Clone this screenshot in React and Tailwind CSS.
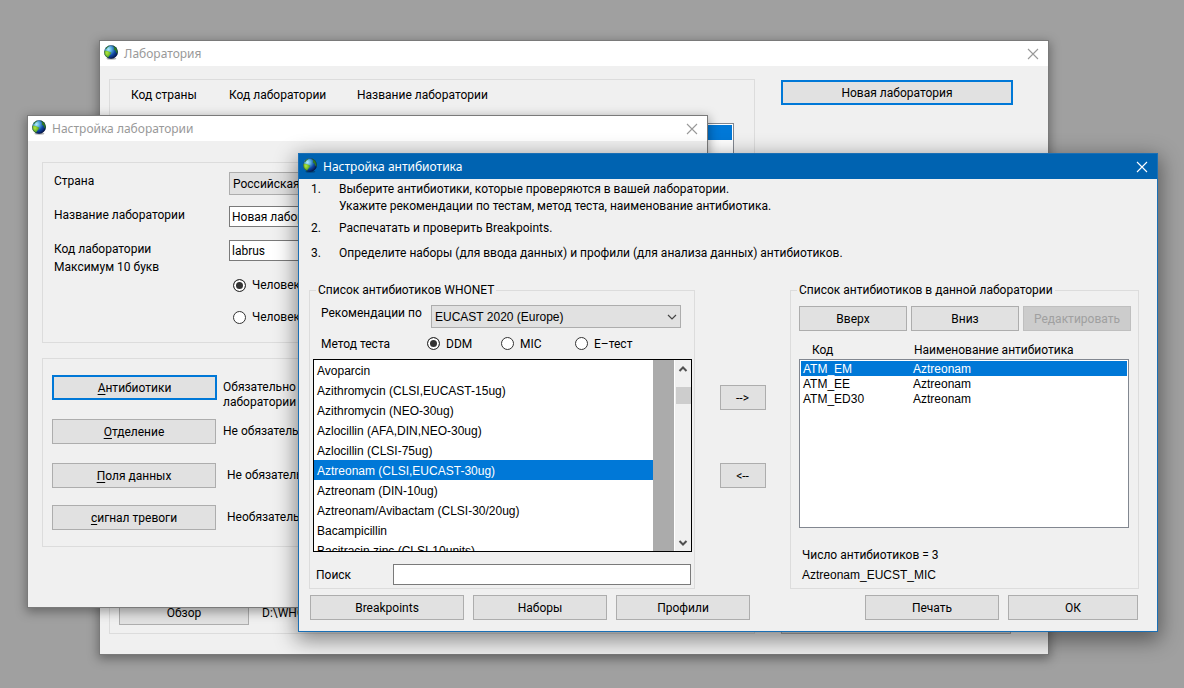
import { useId, useState } from "react";

function Globe() {
  const id = useId();
  return (
    <svg viewBox="0 0 16 16" className="mb-[3px] size-4 shrink-0" aria-hidden="true">
      <defs>
        <radialGradient id={id + "s"} cx="0.32" cy="0.3" r="0.75">
          <stop offset="0" stopColor="#b4ecf8" />
          <stop offset="0.3" stopColor="#5aaede" />
          <stop offset="0.65" stopColor="#0f48a4" />
          <stop offset="1" stopColor="#04144a" />
        </radialGradient>
        <radialGradient id={id + "l"} cx="0.4" cy="0.3" r="0.8">
          <stop offset="0" stopColor="#b4e83a" />
          <stop offset="0.5" stopColor="#6cb82c" />
          <stop offset="1" stopColor="#1c5a18" />
        </radialGradient>
        <clipPath id={id + "c"}>
          <circle cx="7" cy="8" r="6.8" />
        </clipPath>
      </defs>
      <ellipse cx="7.4" cy="14.6" rx="5" ry="1.2" fill="#000" opacity="0.3" />
      <circle cx="7" cy="8" r="6.8" fill={`url(#${id}s)`} />
      <g clipPath={`url(#${id}c)`}>
        <path d="M0 6.6 L2.5 6.8 L5 7.4 L7.4 8.8 L6.2 10.8 L4.8 12.4 L3.8 14.6 L0 13Z" fill={`url(#${id}l)`} />
        <path d="M8 1 L12 2 L14 6 L14 10 L12.2 8.6 L11.4 6.4 L9.8 5.4 L10.2 3.4Z" fill="#2f7a22" />
        <path d="M1.2 4 L4.4 1.4 L6.4 1.4 L3.8 3.2 L2 5.4Z" fill="#3f8a3a" />
      </g>
      <circle cx="7" cy="8" r="6.5" fill="none" stroke="#0a1f3a" strokeWidth="0.6" opacity="0.6" />
    </svg>
  );
}

function Chevron({ up, bold, className = "" }) {
  return (
    <svg viewBox="0 0 10 6" className={"h-1.5 w-2.5 " + className} aria-hidden="true">
      <path d={up ? "M1.5 5 L5 1.5 L8.5 5" : bold ? "M1.5 1 L5 4.5 L8.5 1" : "M1 1 L5 5 L9 1"} fill="none" stroke="currentColor" strokeWidth={bold ? 2 : 1.2} />
    </svg>
  );
}

function AppWindow({ title, active, className, children }) {
  return (
    <section
      aria-label={title}
      className={
        "absolute flex flex-col border bg-[#f0f0f0] " +
        (active
          ? "border-[#1a6fb5] shadow-[0_6px_20px_2px_rgba(0,0,0,0.45)] "
          : "border-[#7a7a7a] shadow-[0_3px_10px_1px_rgba(0,0,0,0.35)] ") +
        className
      }
    >
      <header
        className={
          "flex h-[25px] shrink-0 items-center gap-1 pr-1 pl-1 font-['Noto_Sans',sans-serif] " +
          (active ? "bg-[#0063b1] text-white" : "bg-white text-[#999999]")
        }
      >
        <Globe />
        <h2 className="flex-1">{title}</h2>
        <button type="button" aria-label="Закрыть" className="flex h-5 w-[22px] items-center justify-center">
          <svg viewBox="0 0 12 12" className="size-3" aria-hidden="true">
            <path d="M1 1 L11 11 M11 1 L1 11" stroke="currentColor" strokeWidth="1.1" />
          </svg>
        </button>
      </header>
      {children}
    </section>
  );
}

function Button({ children, primary, className = "", ...rest }) {
  return (
    <button
      type="button"
      className={
        "h-[25px] bg-[#e1e1e1] disabled:border-[#bfbfbf] disabled:bg-[#cccccc] disabled:text-[#a0a0a0] " +
        (primary ? "border-2 border-[#0078d7] " : "border border-[#adadad] ") +
        className
      }
      {...rest}
    >
      {children}
    </button>
  );
}

function Radio({ name, label, defaultChecked, className = "" }) {
  return (
    <label className={"flex items-center gap-1.5 whitespace-nowrap " + className}>
      <input
        type="radio"
        name={name}
        defaultChecked={defaultChecked}
        className="size-[13px] shrink-0 appearance-none rounded-full border border-[#333333] bg-white checked:bg-[#333333] checked:shadow-[inset_0_0_0_2px_white]"
      />
      {label}
    </label>
  );
}

function Combo({ id, value, className = "" }) {
  return (
    <div className={"relative w-full " + className}>
      <select id={id} className="block h-[23px] w-full appearance-none border border-[#adadad] bg-[#e1e1e1] pr-6 pl-[3px]">
        <option>{value}</option>
      </select>
      <Chevron className="pointer-events-none absolute top-[9px] right-1 text-[#444444]" />
    </div>
  );
}

function LaboratoryWindow() {
  return (
    <AppWindow title="Лаборатория" className="top-10 right-[135px] left-[99px]">
      <div className="flex gap-[26px] pt-[13px] pr-[35px] pb-5 pl-[9px]">
        <div className="flex h-[555px] flex-1 flex-col border border-[#dcdcdc] pl-[9px]">
          <div className="flex h-[43px] pt-[6px] pl-[12px] leading-[18px]">
            <span className="w-[98px]">Код страны</span>
            <span className="w-[128px]">Код лаборатории</span>
            <span>Название лаборатории</span>
          </div>
          <div className="mr-[20px] h-[380px] border border-[#828790] bg-white p-px">
            <div className="h-[15px] bg-[#0078d7]" />
          </div>
          <div className="mt-auto mb-[8px] flex items-center gap-[13px]">
            <Button className="w-[130px]">Обзор</Button>
            <span>D:\WHONET</span>
          </div>
        </div>
        <div className="flex w-[232px] flex-col justify-between pt-px">
          <Button primary>Новая лаборатория</Button>
          <Button className="mr-[2px]">Выход</Button>
        </div>
      </div>
    </AppWindow>
  );
}

const sections = [
  { key: "А", rest: "нтибиотики", note: ["Обязательно для", "лаборатории"], primary: true, height: "h-11", indent: "pl-[6px]" },
  { key: "О", rest: "тделение", note: ["Не обязательно"], height: "h-11", indent: "pl-[7px]" },
  { key: "П", rest: "оля данных", note: ["Не обязательно"], height: "h-[42px]", indent: "pl-[11px]" },
  { key: "с", rest: "игнал тревоги", note: ["Необязательно"], height: "h-[41px]", indent: "pl-[11px]" },
];

function LaboratorySetupWindow() {
  const field = "h-[21px] border border-[#7a7a7a] bg-white px-[2px]";
  return (
    <AppWindow title="Настройка лаборатории" className="top-[115px] right-[476px] left-[27px]">
      <div className="flex flex-col gap-[15px] px-[14px] pt-[21px] pb-[60px]">
        <div className="grid grid-cols-[175px_1fr] border border-[#dcdcdc] px-[11px] py-[9px] leading-[18px]">
          <label htmlFor="country" className="h-[34px]">Страна</label>
          <div><Combo id="country" value="Российская Федерация" /></div>
          <label htmlFor="lab-name" className="h-[34px]">Название лаборатории</label>
          <div className="flex flex-col">
            <input id="lab-name" defaultValue="Новая лаборатория" className={field} />
          </div>
          <label htmlFor="lab-code">
            Код лаборатории
            <br />
            Максимум 10 букв
          </label>
          <div className="flex flex-col">
            <input id="lab-code" defaultValue="labrus" className={field} />
            <div className="flex flex-col pt-2 pl-1">
              <Radio name="scope" label="Человек" defaultChecked className="h-8" />
              <Radio name="scope" label="Человек и животные" className="h-8" />
            </div>
          </div>
        </div>
        <div className="border border-[#dcdcdc] pt-[16px] pl-[9px]">
          {sections.map((s) => (
            <div key={s.key} className={"flex items-start " + s.height}>
              <Button primary={s.primary} className={s.primary ? "w-[165px]" : "w-[164px]"}>
                <span className="underline underline-offset-2">{s.key}</span>
                {s.rest}
              </Button>
              <p className={"pt-[5px] leading-[15px] " + s.indent}>
                {s.note.map((line) => (
                  <span key={line} className="block">{line}</span>
                ))}
              </p>
            </div>
          ))}
        </div>
      </div>
    </AppWindow>
  );
}

const antibiotics = [
  "Avoparcin",
  "Azithromycin (CLSI,EUCAST-15ug)",
  "Azithromycin (NEO-30ug)",
  "Azlocillin (AFA,DIN,NEO-30ug)",
  "Azlocillin (CLSI-75ug)",
  "Aztreonam (CLSI,EUCAST-30ug)",
  "Aztreonam (DIN-10ug)",
  "Aztreonam/Avibactam (CLSI-30/20ug)",
  "Bacampicillin",
  "Bacitracin zinc (CLSI-10units)",
];

const labList = [
  ["ATM_EM", "Aztreonam"],
  ["ATM_EE", "Aztreonam"],
  ["ATM_ED30", "Aztreonam"],
];

function AntibioticList() {
  const [selected, setSelected] = useState(5);
  return (
    <div className="mr-[2px] ml-[3px] flex h-[193px] border border-black bg-[#ababab] font-['Liberation_Sans',Arial,sans-serif]">
      <ul role="listbox" aria-label="Список антибиотиков WHONET" className="mr-[21px] flex-1 overflow-hidden bg-white">
        {antibiotics.map((name, i) => (
          <li
            key={name}
            role="option"
            aria-selected={i === selected}
            onClick={() => setSelected(i)}
            className={"h-5 pl-[3px] leading-[22px] " + (i === selected ? "bg-[#0078d7] text-white" : "")}
          >
            {name}
          </li>
        ))}
      </ul>
      <div className="flex w-[17px] flex-col items-center border-l border-white bg-[#f0f0f0] text-[#505050]">
        <button type="button" aria-label="Прокрутить вверх" className="flex h-[17px] w-full items-center justify-center">
          <Chevron up bold />
        </button>
        <div className="mt-[10px] h-[17px] w-[15px] bg-[#cdcdcd]" />
        <button type="button" aria-label="Прокрутить вниз" className="mt-auto flex h-[17px] w-full items-center justify-center">
          <Chevron bold />
        </button>
      </div>
    </div>
  );
}

function AntibioticSetupWindow() {
  return (
    <AppWindow active title="Настройка антибиотика" className="top-[153px] right-[26px] left-[298px]">
      <ol className="pt-[2px] pl-3 leading-[17px]">
        <li className="flex">
          <span className="w-7">1.</span>
          <span>
            Выберите антибиотики, которые проверяются в вашей лаборатории.
            <br />
            Укажите рекомендации по тестам, метод теста, наименование антибиотика.
          </span>
        </li>
        <li className="mt-[5px] flex">
          <span className="w-7">2.</span>
          <span>Распечатать и проверить Breakpoints.</span>
        </li>
        <li className="mt-2 flex">
          <span className="w-7">3.</span>
          <span>Определите наборы (для ввода данных) и профили (для анализа данных) антибиотиков.</span>
        </li>
      </ol>

      <div className="mt-5 grid grid-cols-[386fr_95fr_349fr] pr-[18px] pl-[10px]">
        <fieldset className="min-w-0 border border-[#dcdcdc]">
          <legend className="ml-[6px] px-[2px] leading-4">Список антибиотиков WHONET</legend>
          <div className="flex pt-[7px] pr-[13px] pl-[11px]">
            <label htmlFor="guidelines" className="w-[110px] shrink-0 leading-4">Рекомендации по</label>
            <Combo id="guidelines" value="EUCAST 2020 (Europe)" className="font-['Liberation_Sans',Arial,sans-serif]" />
          </div>
          <div role="radiogroup" aria-labelledby="method" className="flex h-[31px] items-center pl-[11px]">
            <span id="method" className="w-[106px]">Метод теста</span>
            <Radio name="method" label="DDM" defaultChecked className="w-[74px]" />
            <Radio name="method" label="MIC" className="w-[74px]" />
            <Radio name="method" label="E–тест" />
          </div>
          <AntibioticList />
          <div className="mt-3 flex items-center pr-[3px] pb-[3px] pl-[6px]">
            <label htmlFor="search" className="w-[77px]">Поиск</label>
            <input id="search" className="h-[21px] min-w-0 flex-1 border border-[#7a7a7a] bg-white px-[3px]" />
          </div>
        </fieldset>

        <div className="flex flex-col items-center gap-[53px] pt-[103px]">
          <Button aria-label="Добавить" className="w-[46px]">--&gt;</Button>
          <Button aria-label="Удалить" className="w-[46px]">&lt;--</Button>
        </div>

        <fieldset className="min-w-0 border border-[#dcdcdc] pl-2">
          <legend className="-ml-[2px] px-[2px] leading-4">Список антибиотиков в данной лаборатории</legend>
          <div className="grid grid-cols-3 gap-1 pt-2 pr-[7px]">
            <Button>Вверх</Button>
            <Button>Вниз</Button>
            <Button disabled>Редактировать</Button>
          </div>
          <table className="mt-[10px] mr-[9px] block text-left">
            <thead className="block">
              <tr className="flex h-[18px] pl-[13px] leading-[18px]">
                <th scope="col" className="w-[102px] font-normal">Код</th>
                <th scope="col" className="font-normal">Наименование антибиотика</th>
              </tr>
            </thead>
            <tbody className="block h-[169px] border border-[#828790] bg-white p-px font-['Liberation_Sans',Arial,sans-serif]">
              {labList.map(([code, name], i) => (
                <tr key={code} className={"flex h-[15px] pl-[2px] leading-[17px] " + (i === 0 ? "bg-[#0078d7] text-white" : "")}>
                  <td className="w-[110px]">{code}</td>
                  <td>{name}</td>
                </tr>
              ))}
            </tbody>
          </table>
          <div className="mt-[17px] pl-[3px] leading-5">
            <p>Число антибиотиков = 3</p>
            <p className="font-['Liberation_Sans',Arial,sans-serif]">Aztreonam_EUCST_MIC</p>
          </div>
        </fieldset>
      </div>

      <footer className="flex gap-[9px] pt-[6px] pr-[19px] pb-[11px] pl-[11px]">
        <Button className="w-[154px]">Breakpoints</Button>
        <Button className="w-[134px]">Наборы</Button>
        <Button className="w-[134px]">Профили</Button>
        <Button className="ml-auto w-[134px]">Печать</Button>
        <Button className="w-[130px]">ОК</Button>
      </footer>
    </AppWindow>
  );
}

export default function App() {
  return (
    <main className="relative min-h-screen overflow-hidden bg-[#a0a0a0] font-[Roboto,'Liberation_Sans',sans-serif] text-[12px] text-black">
      <LaboratoryWindow />
      <LaboratorySetupWindow />
      <AntibioticSetupWindow />
    </main>
  );
}
